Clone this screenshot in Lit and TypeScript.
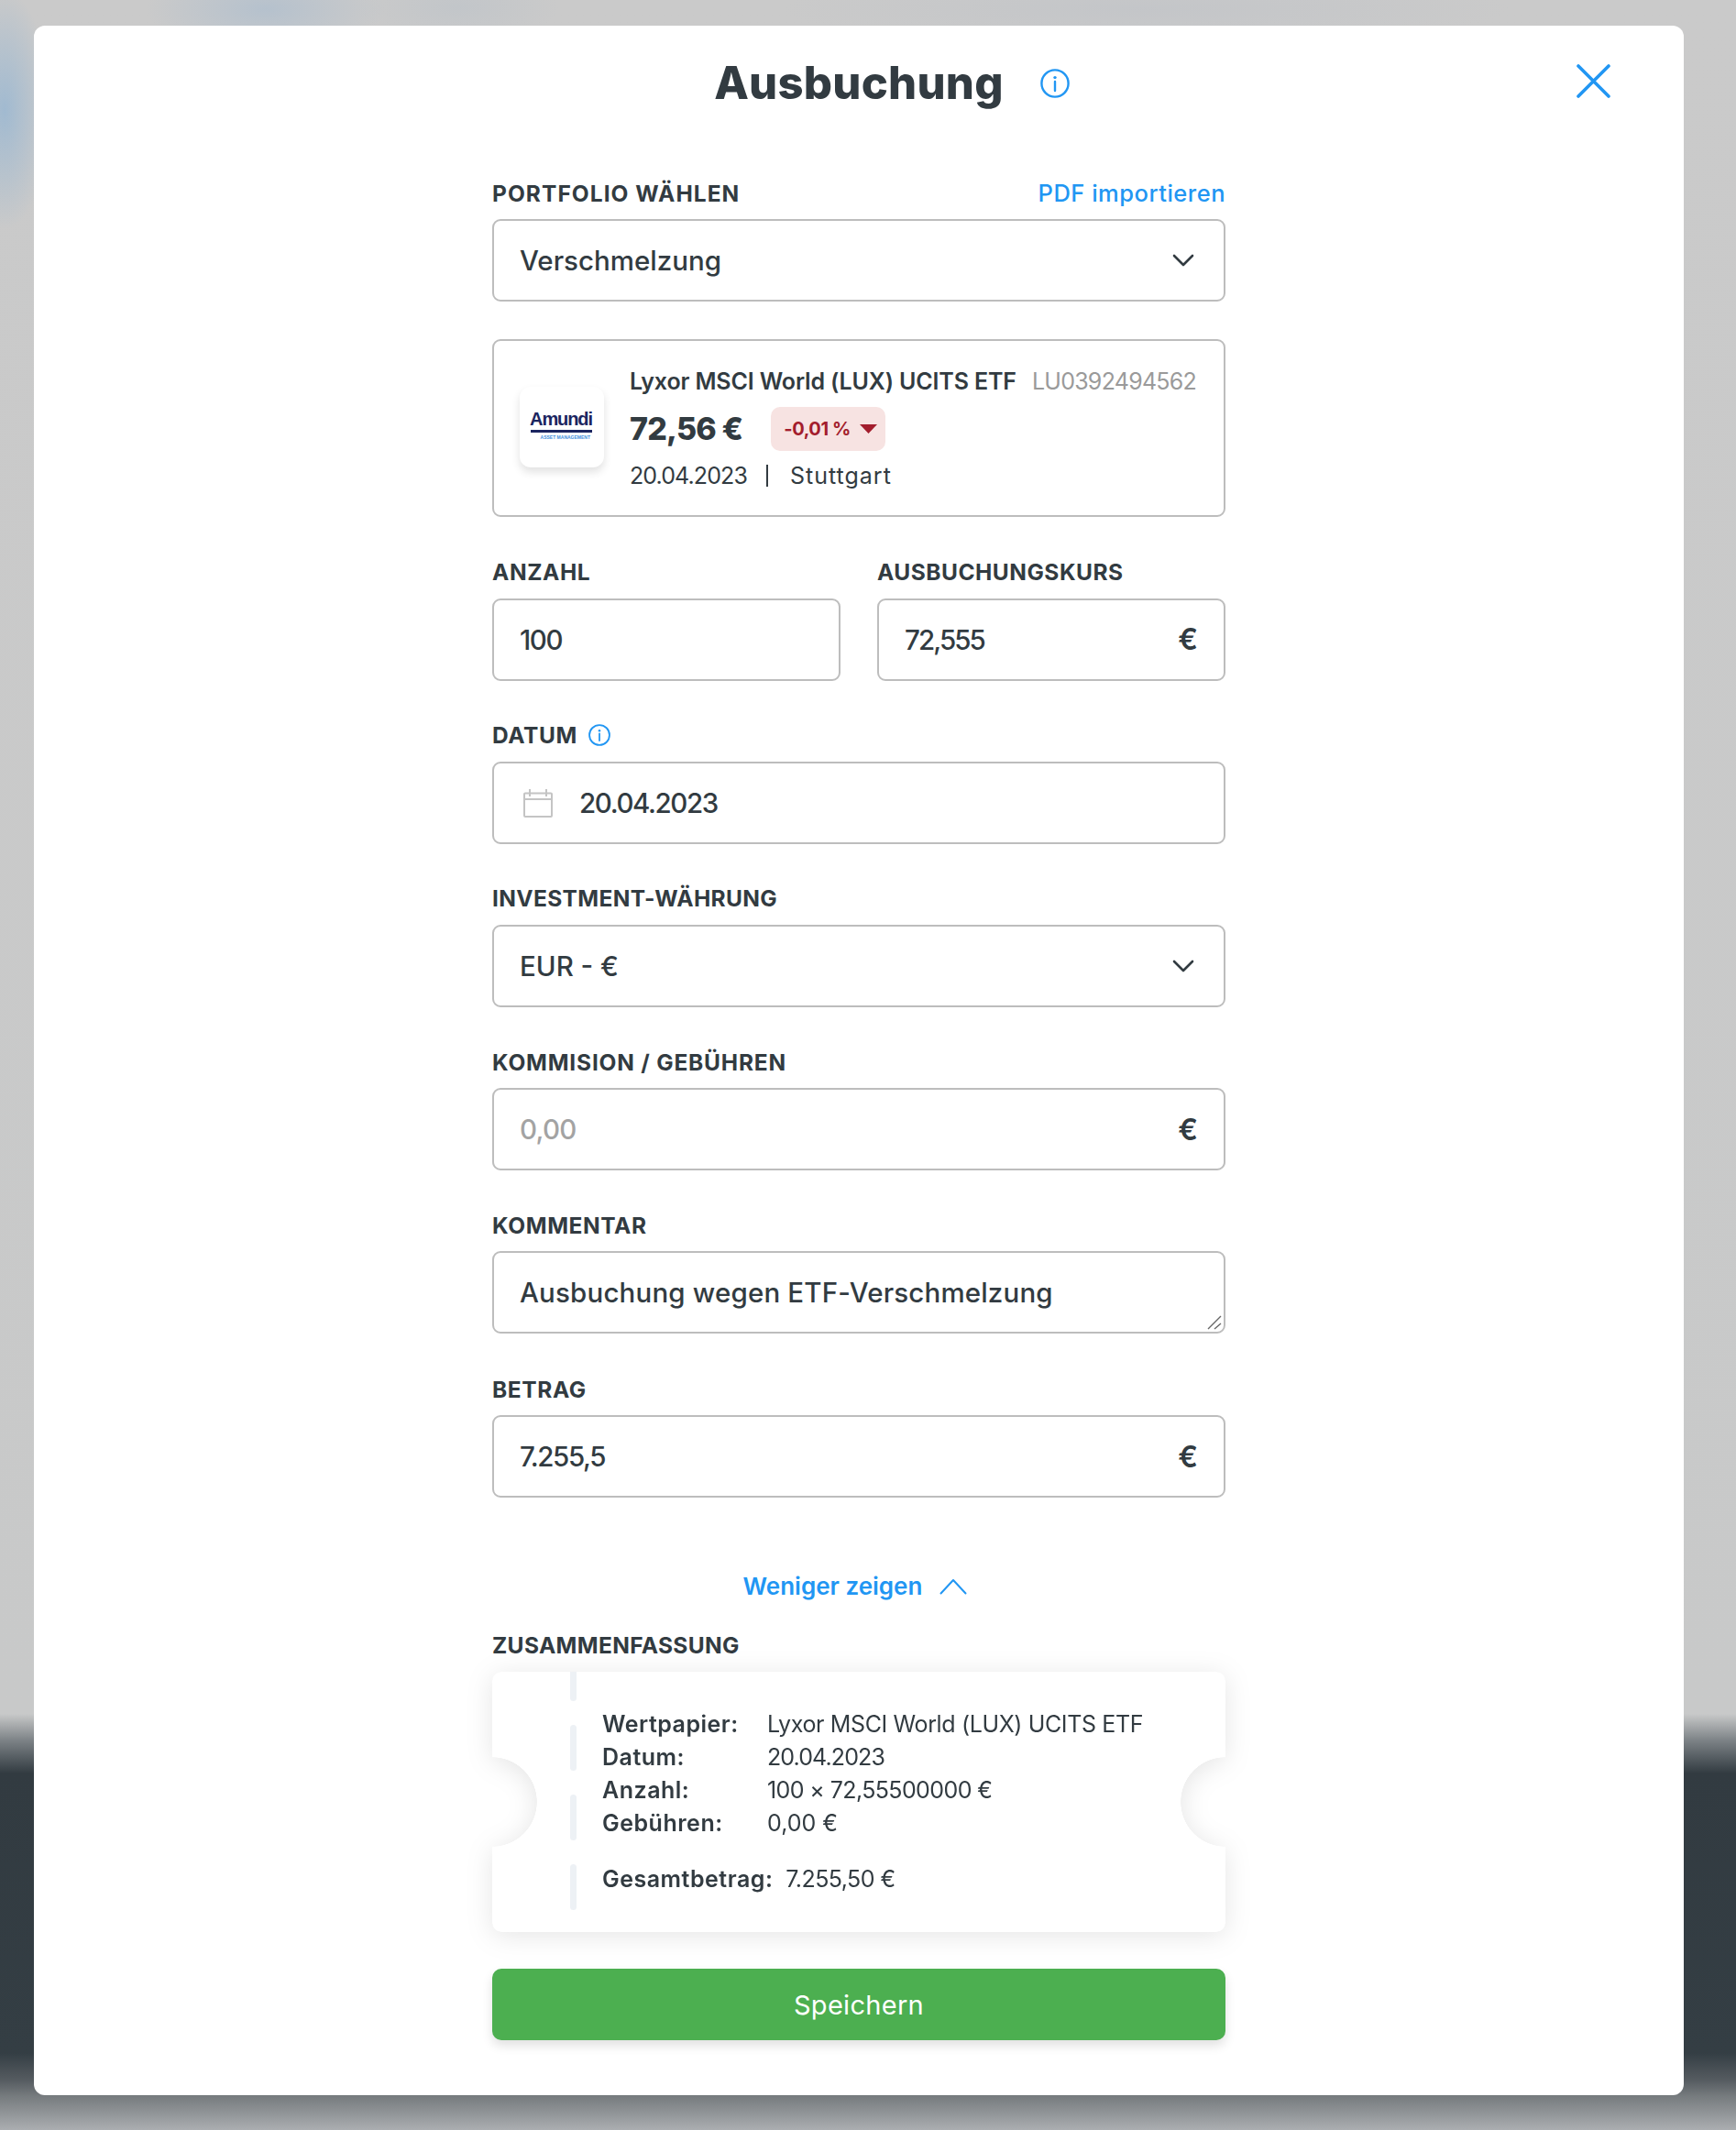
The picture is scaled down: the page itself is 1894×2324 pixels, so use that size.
import { LitElement, html, css, svg } from "lit";
import { customElement } from "lit/decorators.js";

const chevron = svg`<path d="M2 2l10 10L22 2" fill="none" stroke="#323b41" stroke-width="2.6" stroke-linecap="round" stroke-linejoin="round"/>`;
const info = svg`<circle cx="16" cy="16" r="14.6" fill="none" stroke="#2196f3" stroke-width="2.4"/><circle cx="16" cy="9.6" r="1.7" fill="#2196f3"/><path d="M16 14v10" stroke="#2196f3" stroke-width="2.4" stroke-linecap="round"/>`;

@customElement("app-root")
export class AppRoot extends LitElement {
  static styles = css`
    :host {
      display: block;
      box-sizing: border-box;
      height: 2324px;
      overflow: hidden;
      padding: 28px 0 0 37px;
      font-family: "Inter", "Liberation Sans", sans-serif;
      color: #323b41;
      background:
        radial-gradient(ellipse 130px 50px at 290px 10px, rgba(150, 180, 210, 0.4), transparent),
        radial-gradient(ellipse 110px 40px at 500px 8px, rgba(170, 185, 200, 0.25), transparent),
        radial-gradient(ellipse 400px 40px at 1250px 10px, rgba(170, 180, 195, 0.2), transparent),
        radial-gradient(ellipse 50px 130px at 5px 120px, rgba(120, 170, 215, 0.5), transparent),
        linear-gradient(180deg, #cacaca 0, #c8c9c9 1870px, #7a8084 1900px, #323b41 1935px, #343e44 2240px, #565c61 2270px, #767b7e 2287px, #abaeb1 2324px);
    }
    * { box-sizing: border-box; }
    .modal {
      width: 1800px;
      height: 2258px;
      background: #fff;
      border-radius: 12px;
      display: flex;
      flex-direction: column;
      align-items: center;
      padding-top: 33px;
    }
    .head {
      width: 100%;
      height: 60px;
      display: flex;
      justify-content: center;
      align-items: center;
      position: relative;
      margin-bottom: 75px;
    }
    h1 {
      margin: 0;
      font-size: 49px;
      font-weight: 800;
      letter-spacing: 0.25px;
      line-height: 60px;
    }
    .title-info {
      position: absolute;
      left: 1098px;
      top: 14px;
      width: 32px;
      height: 32px;
    }
    .close {
      position: absolute;
      left: 1683px;
      top: 9px;
      width: 37px;
      height: 37px;
    }
    .form { width: 800px; display: flex; flex-direction: column; }
    .label-row {
      height: 29px;
      margin-bottom: 14px;
      display: flex;
      align-items: center;
      justify-content: space-between;
      font-size: 24.5px;
      font-weight: 700;
      letter-spacing: 0.6px;
      white-space: nowrap;
    }
    .label { display: flex; align-items: center; gap: 12px; }
    .lab-wide { letter-spacing: 1.05px; }
    .lab-mid { letter-spacing: 0.8px; }
    .lab-near { letter-spacing: 0.5px; }
    .lab-tight { letter-spacing: 0.35px; }
    .link { color: #2196f3; font-size: 25.5px; font-weight: 500; letter-spacing: 0.5px; }
    .box {
      height: 90px;
      border: 2px solid #bdbdbd;
      border-radius: 9px;
      display: flex;
      align-items: center;
      justify-content: space-between;
      padding: 0 28px;
      font-size: 29.5px;
      font-weight: 500;
      position: relative;
    }
    .field { margin-bottom: 45.2px; }
    .field-last { margin-bottom: 46px; }
    .muted { color: #a3a3a3; letter-spacing: -0.75px; }
    .num { letter-spacing: -1.4px; }
    .num-tight { letter-spacing: -1.9px; }
    .wide { letter-spacing: 0.17px; }
    .euro { font-size: 32px; font-weight: 600; }
    .chev { width: 24px; height: 14px; margin-right: 4px; }
    .pair { display: grid; grid-template-columns: 380px 380px; gap: 40px; }
    .date { justify-content: flex-start; gap: 29px; padding-left: 32px; }
    .date svg { width: 32px; height: 32px; }
    .grip { position: absolute; right: 2px; bottom: 2px; width: 16px; height: 16px; }
    .card {
      height: 194px;
      border: 2px solid #bdbdbd;
      border-radius: 9px;
      margin: 41px 0 45.5px;
      display: flex;
      align-items: center;
      padding-left: 28px;
      gap: 28px;
    }
    .logo {
      width: 92px;
      height: 88px;
      border-radius: 12px;
      background: #fff;
      box-shadow: 0 5px 10px rgba(0, 0, 0, 0.12);
      display: flex;
      flex-direction: column;
      align-items: center;
      justify-content: center;
      margin-top: -2px;
      padding-bottom: 6px;
      padding-right: 2px;
    }
    .logo b {
      font-family: "Liberation Sans", sans-serif;
      font-size: 20px;
      line-height: 21px;
      letter-spacing: -1.1px;
      color: #1b2560;
    }
    .logo i { display: block; width: 67px; height: 3px; background: #1b2560; margin: 1px 0 3px; }
    .logo span {
      font-family: "Liberation Sans", sans-serif;
      font-size: 5px;
      line-height: 5px;
      font-weight: 700;
      color: #3f8fdc;
      align-self: flex-end;
      margin-right: 13px;
    }
    .info { display: flex; flex-direction: column; }
    .l1 { height: 30px; display: flex; align-items: center; font-size: 25px; font-weight: 600; letter-spacing: -0.14px; white-space: nowrap; }
    .l1 span { margin-left: 17px; color: #9a9a9a; font-weight: 400; letter-spacing: -0.75px; }
    .l2 { display: flex; align-items: center; gap: 31px; margin-top: 13px; height: 48px; }
    .price { font-size: 34px; font-weight: 800; letter-spacing: -0.85px; }
    .badge {
      width: 125px;
      height: 48px;
      border-radius: 10px;
      background: #f7e3e2;
      color: #a31d2d;
      font-size: 20px;
      font-weight: 700;
      letter-spacing: -0.4px;
      display: flex;
      align-items: center;
      gap: 10px;
      padding-left: 14px;
    }
    .tri { width: 19px; height: 10px; }
    .l3 { height: 30px; margin-top: 12px; display: flex; align-items: center; font-size: 25px; font-weight: 400; white-space: nowrap; }
    .l3 .d { letter-spacing: -0.9px; }
    .l3 .sep { width: 2px; height: 24px; background: #323b41; margin: 0 24px 0 21px; }
    .l3 .s { letter-spacing: 1px; }
    .more {
      align-self: center;
      display: flex;
      align-items: center;
      gap: 19px;
      color: #2196f3;
      font-size: 26px;
      font-weight: 600;
      margin: 36.5px 8px 0 0;
      height: 30px;
    }
    .more svg { width: 30px; height: 18px; }
    .sum-label { margin-top: 35px; }
    .ticket-wrap { margin-top: 0.5px; filter: drop-shadow(0 4px 14px rgba(0, 0, 0, 0.1)); }
    .ticket {
      height: 284px;
      background: #fff;
      border-radius: 10px;
      position: relative;
      overflow: hidden;
      padding: 39px 0 0 120px;
      -webkit-mask:
        radial-gradient(circle 49px at 0 142px, transparent 48.5px, #000 49px),
        radial-gradient(circle 49px at 800px 142px, transparent 48.5px, #000 49px);
      -webkit-mask-composite: source-in;
      mask-composite: intersect;
    }
    .dash {
      position: absolute;
      left: 85px;
      top: -18px;
      display: flex;
      flex-direction: column;
      gap: 26px;
    }
    .dash i { display: block; width: 7px; height: 50px; border-radius: 4px; background: #edf1f5; }
    .row { display: grid; grid-template-columns: 180px auto; height: 36px; align-items: center; font-size: 25px; white-space: nowrap; }
    .row b, .total b { font-weight: 600; letter-spacing: 0.5px; }
    .v1 { letter-spacing: -0.37px; }
    .v2 { letter-spacing: -0.9px; }
    .v3 { letter-spacing: -0.6px; }
    .v4 { letter-spacing: 0px; }
    .v5 { letter-spacing: -0.55px; }
    .total { display: flex; gap: 14px; height: 36px; align-items: center; margin-top: 25px; font-size: 25px; white-space: nowrap; }
    .save {
      margin-top: 40px;
      height: 78px;
      border-radius: 10px;
      background: #4caf50;
      color: #fff;
      font-size: 29px;
      font-weight: 400;
      letter-spacing: 0.3px;
      display: flex;
      align-items: center;
      justify-content: center;
      box-shadow: 0 6px 12px rgba(0, 0, 0, 0.12);
    }
  `;

  private field(label: unknown, value: unknown, extra: unknown = null, cls = "", fieldCls = "field") {
    return html`<div class="${fieldCls}">
      <div class="label-row"><div class="label">${label}</div></div>
      <div class="box ${cls}">${value}${extra}</div>
    </div>`;
  }

  render() {
    const euro = html`<span class="euro">€</span>`;
    const chev = html`<svg class="chev" viewBox="0 0 24 14">${chevron}</svg>`;
    return html`
      <div class="modal">
        <div class="head">
          <h1>Ausbuchung</h1>
          <svg class="title-info" viewBox="0 0 32 32">${info}</svg>
          <svg class="close" viewBox="0 0 37 37"><path d="M2 2l33 33M35 2L2 35" stroke="#2196f3" stroke-width="3.6" stroke-linecap="round"/></svg>
        </div>
        <div class="form">
          <div class="label-row"><span class="lab-wide">PORTFOLIO WÄHLEN</span><span class="link">PDF importieren</span></div>
          <div class="box"><span>Verschmelzung</span>${chev}</div>
          <div class="card">
            <div class="logo"><b>Amundi</b><i></i><span>ASSET MANAGEMENT</span></div>
            <div class="info">
              <div class="l1">Lyxor MSCI World (LUX) UCITS ETF<span>LU0392494562</span></div>
              <div class="l2">
                <div class="price">72,56 €</div>
                <div class="badge">-0,01 %<svg class="tri" viewBox="0 0 19 10"><path d="M0 0h19L9.500 10z" fill="#a31d2d"/></svg></div>
              </div>
              <div class="l3"><span class="d">20.04.2023</span><span class="sep"></span><span class="s">Stuttgart</span></div>
            </div>
          </div>
          <div class="pair">
            ${this.field("ANZAHL", html`<span class="num">100</span>`)}
            ${this.field(html`<span class="lab-near">AUSBUCHUNGSKURS</span>`, html`<span class="num-tight">72,555</span>`, euro)}
          </div>
          ${this.field(
            html`DATUM<svg width="24" height="24" viewBox="0 0 32 32">${info}</svg>`,
            html`<svg viewBox="0 0 32 32"><path d="M2 5.500h28a1 1 0 0 1 1 1V30a1 1 0 0 1-1 1H2a1 1 0 0 1-1-1V6.500a1 1 0 0 1 1-1zM1 12h30M7 1v8M25 1v8" fill="none" stroke="#c4c4c4" stroke-width="2"/></svg><span class="num">20.04.2023</span>`,
            null,
            "date"
          )}
          ${this.field(html`<span class="lab-tight">INVESTMENT-WÄHRUNG</span>`, html`<span>EUR - €</span>`, chev)}
          ${this.field(html`<span class="lab-mid">KOMMISION / GEBÜHREN</span>`, html`<span class="muted">0,00</span>`, euro)}
          ${this.field(
            "KOMMENTAR",
            html`<span class="wide">Ausbuchung wegen ETF-Verschmelzung</span>`,
            html`<svg class="grip" viewBox="0 0 16 16"><path d="M1 15L15 1M8 15l7-6" stroke="#666" stroke-width="1.4"/></svg>`,
            "",
            "field-last"
          )}
          ${this.field("BETRAG", html`<span class="num">7.255,5</span>`, euro)}
          <div class="more">Weniger zeigen<svg viewBox="0 0 30 18"><path d="M1.500 16.500L15 2l13.500 14.500" fill="none" stroke="#2196f3" stroke-width="2" stroke-linecap="round" stroke-linejoin="round"/></svg></div>
          <div class="label-row sum-label"><span class="lab-tight">ZUSAMMENFASSUNG</span></div>
          <div class="ticket-wrap">
            <div class="ticket">
              <div class="dash"><i></i><i></i><i></i><i></i><i></i></div>
              <div class="row"><b>Wertpapier:</b><span class="v1">Lyxor MSCI World (LUX) UCITS ETF</span></div>
              <div class="row"><b>Datum:</b><span class="v2">20.04.2023</span></div>
              <div class="row"><b>Anzahl:</b><span class="v3">100 × 72,55500000 €</span></div>
              <div class="row"><b>Gebühren:</b><span class="v4">0,00 €</span></div>
              <div class="total"><b>Gesamtbetrag:</b><span class="v5">7.255,50 €</span></div>
            </div>
          </div>
          <div class="save">Speichern</div>
        </div>
      </div>
    `;
  }
}
